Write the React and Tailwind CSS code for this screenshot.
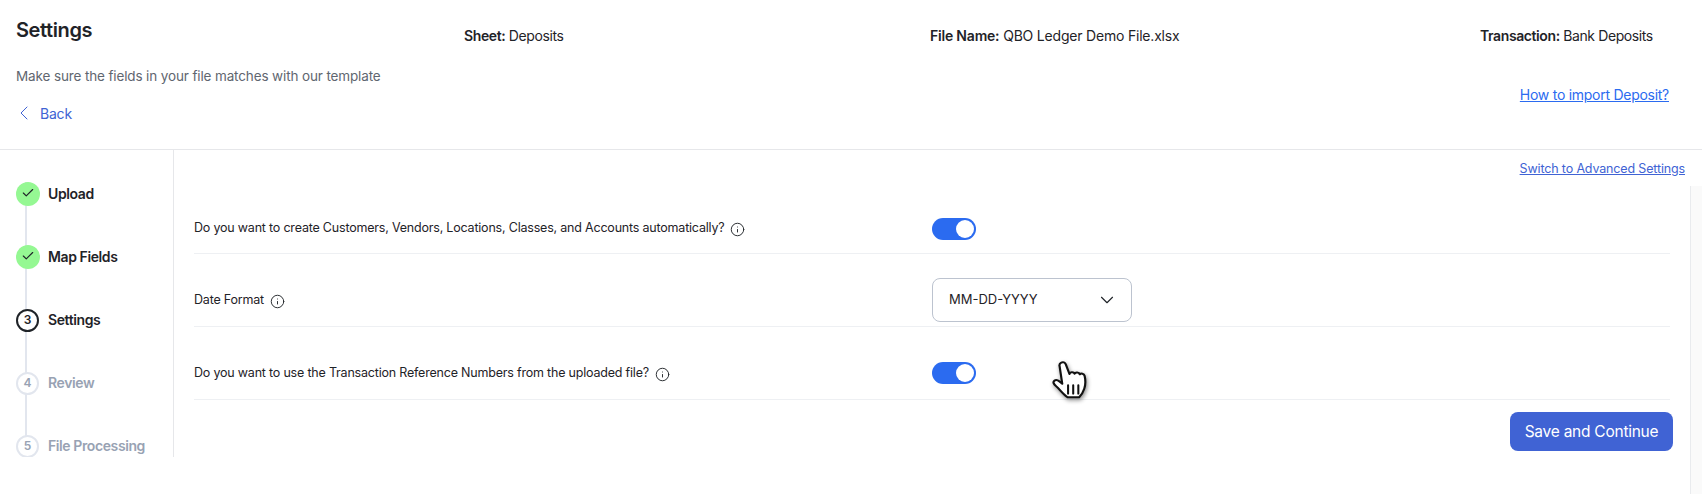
import { Check, ChevronDown, ChevronLeft, Info } from "lucide-react";

const steps = [
  { label: "Upload", state: "done" },
  { label: "Map Fields", state: "done" },
  { label: "Settings", state: "active", n: 3 },
  { label: "Review", state: "todo", n: 4 },
  { label: "File Processing", state: "todo", n: 5 },
];

function StepDot({ step }) {
  if (step.state === "done") {
    return (
      <div className="z-10 flex h-6 w-6 shrink-0 items-center justify-center rounded-full bg-[#95f893]">
        <Check size={14} strokeWidth={2} className="-mt-0.5 text-[#1f2328]" />
      </div>
    );
  }
  if (step.state === "active") {
    return (
      <div className="z-10 mr-px flex h-[23px] w-[23px] shrink-0 items-center justify-center rounded-full border-2 border-[#1f2328] bg-white text-xs font-semibold text-[#1f2328]">
        {step.n}
      </div>
    );
  }
  return (
    <div className="z-10 mr-px flex h-[23px] w-[23px] shrink-0 items-center justify-center rounded-full border-2 border-[#e2e6ee] bg-white text-xs font-semibold text-[#98a2b3]">
      {step.n}
    </div>
  );
}

function Toggle() {
  return (
    <div className="flex h-[22px] w-[44px] items-center justify-end rounded-full bg-[#2b6bf0] pr-[2px]">
      <div className="h-[18px] w-[18px] rounded-full bg-white" />
    </div>
  );
}

function Row({ label, children, height }) {
  return (
    <div className={`flex items-center border-b border-[#eef0f3] ${height}`}>
      <div className="flex w-[738px] items-center gap-[6px] text-[12.5px] tracking-[-0.2px] text-[#1f2328]">
        <span>{label}</span>
        <Info size={15} strokeWidth={1.5} className="mt-[2px]" />
      </div>
      {children}
    </div>
  );
}

function HandCursor() {
  return (
    <svg
      viewBox="0 0 36 40"
      preserveAspectRatio="none"
      className="absolute left-[1051px] top-[359px] h-[42px] w-[41px] drop-shadow-[1px_2px_2px_rgba(0,0,0,0.45)]"
    >
      <path
        d="M9 3.5c1.6-1 3.3-.2 4 1.6l3.2 9.2c.3-2 3.6-2.4 4.6-.3.5-1.6 3.8-1.6 4.5.6.9-1.2 3.7-.8 4.2 1.4.8 3.6.9 8.4-.3 12.4-1 3.4-3 6.5-4.5 8H14.5c-2.6-1.8-5.6-5.4-8-8.4-1.3-1.6-3.7-3.4-4.2-5-.6-1.9 1.5-3.6 3.6-2.6 1.3.6 2.7 2 4 3.2L7.6 7.2c-.4-1.4 0-3 1.4-3.7z"
        fill="#fff"
        stroke="#111"
        strokeWidth="1.9"
        strokeLinejoin="round"
      />
      <path d="M15 25v8M19.5 25v8M24 25v8" stroke="#111" strokeWidth="1.8" strokeLinecap="round" />
    </svg>
  );
}

export default function App() {
  return (
    <div className="relative h-[494px] w-[1702px] overflow-hidden bg-white font-['Inter',sans-serif] text-[#1f2328]">
      <header className="h-[150px] border-b border-[#e6e7ea]">
        <div className="flex h-[60px] items-start pl-4 pt-[18px]">
          <h1 className="w-[448px] text-[20px] font-semibold leading-6 tracking-[-0.4px]">Settings</h1>
          <p className="mt-[8px] w-[466px] text-[14px] leading-5 tracking-[-0.4px]">
            <b className="font-semibold">Sheet:</b> Deposits
          </p>
          <p className="mt-[8px] w-[550px] text-[14px] leading-5 tracking-[-0.2px]">
            <b className="font-semibold">File Name:</b> QBO Ledger Demo File.xlsx
          </p>
          <p className="mt-[8px] text-[14px] leading-5 tracking-[-0.4px]">
            <b className="font-semibold">Transaction:</b> Bank Deposits
          </p>
        </div>
        <div className="flex items-start justify-between pl-4 pr-[33px]">
          <div>
            <p className="mt-[6px] text-[13.5px] leading-5 tracking-[-0.13px] text-[#5f6670]">
              Make sure the fields in your file matches with our template
            </p>
            <button className="mt-[18px] -ml-[4.5px] flex items-center gap-[4.5px] text-[14px] leading-5 tracking-[-0.2px] text-[#4063d4]">
              <ChevronLeft size={24} strokeWidth={1} className="-my-1 -mt-[6px]" />
              Back
            </button>
          </div>
          <a className="mt-[25px] text-[14px] leading-5 tracking-[-0.27px] text-[#2b6bf0] underline">How to import Deposit?</a>
        </div>
      </header>

      <div className="flex h-[344px] items-start">
        <aside className="relative h-[307px] w-[174px] shrink-0 overflow-hidden border-r border-[#e6e7ea] pl-4 pt-[32px]">
          <div className="absolute bottom-0 left-[25px] top-[32px] w-[2px] bg-[#e2e6ee]" />
          <ul className="flex flex-col gap-[39px]">
            {steps.map((s) => (
              <li key={s.label} className="flex h-6 items-center gap-2">
                <StepDot step={s} />
                <span className={`-mt-px text-[14px] font-semibold tracking-[-0.4px] ${s.state === "todo" ? "text-[#98a2b3]" : "text-[#1f2328]"}`}>
                  {s.label}
                </span>
              </li>
            ))}
          </ul>
        </aside>

        <main className="flex h-full min-w-0 flex-1 pl-5">
          <div className="w-[1476px]">
            <div className="flex h-[37px] justify-end">
              <a className="-mr-[15px] mt-[9px] text-[12.5px] leading-5 tracking-[-0.15px] text-[#4063d4] underline">Switch to Advanced Settings</a>
            </div>
            <Row label="Do you want to create Customers, Vendors, Locations, Classes, and Accounts automatically?" height="h-[67px] pt-[17px]">
              <Toggle />
            </Row>
            <Row label="Date Format" height="h-[73px] pt-[20px]">
              <div className="flex h-[44px] w-[200px] items-center justify-between rounded-lg border border-[#bcc3cf] pl-[16px] pr-[13px] text-[13px]">
                MM-DD-YYYY
                <ChevronDown size={22} strokeWidth={1.25} />
              </div>
            </Row>
            <Row label="Do you want to use the Transaction Reference Numbers from the uploaded file?" height="h-[73px] pt-[20px]">
              <Toggle />
            </Row>
            <div className="mt-[12px] flex justify-end">
              <button className="-mr-[3px] h-[39px] w-[163px] rounded-lg bg-[#4063d4] text-[15.5px] tracking-[-0.25px] text-white">Save and Continue</button>
            </div>
          </div>
          <div className="ml-[20px] mt-[36px] w-3 flex-1 border-l border-[#e9ebee] bg-[#fafafa]" />
        </main>
      </div>
      <HandCursor />
    </div>
  );
}
